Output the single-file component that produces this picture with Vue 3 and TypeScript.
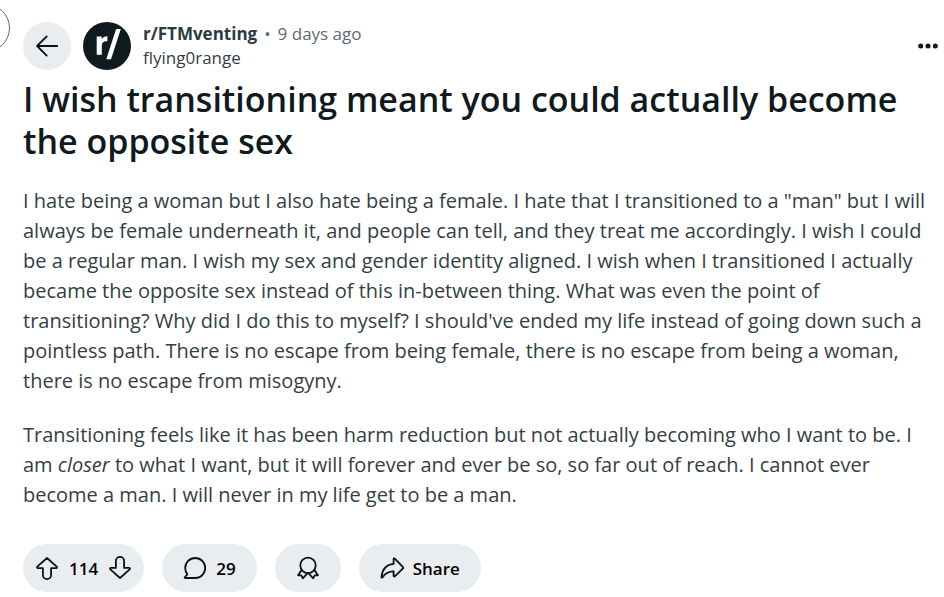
<script setup lang="ts">
interface Post {
  community: string
  age: string
  author: string
  title: string
  votes: number
  comments: number
}

const post: Post = {
  community: 'r/FTMventing',
  age: '9 days ago',
  author: 'flying0range',
  title: 'I wish transitioning meant you could actually become the opposite sex',
  votes: 114,
  comments: 29,
}
</script>

<template>
  <div class="page">
    <button class="nav-toggle" type="button" aria-label="Toggle navigation"></button>
    <article class="post">
      <header class="head">
        <button class="round back" type="button" aria-label="Back">
          <svg width="24" height="24" viewBox="0 0 24 24" class="line">
            <path d="M22.3 12H2.5M11.7 2.4L2.1 12l9.6 9.6" />
          </svg>
        </button>
        <a class="avatar" href="#" aria-label="Community">
          <svg width="48" height="48" viewBox="0 0 48 48">
            <circle cx="24" cy="24" r="24" fill="#0e1a1d" />
            <path fill="#fff" d="M13.7 14.6h5v2.7c1-2 2.9-3 5.7-3v4.9c-3.9-.4-5.6 1.2-5.6 4.5v9h-5.1zM33.1 7h4.7L28 37.3h-4.7z" />
          </svg>
        </a>
        <div class="meta">
          <div class="meta-row">
            <a class="community" href="#">{{ post.community }}</a>
            <span class="dot">•</span>
            <span class="age">{{ post.age }}</span>
          </div>
          <a class="author" href="#">{{ post.author }}</a>
        </div>
        <button class="more" type="button" aria-label="More options">
          <svg width="24" height="24" viewBox="0 0 24 24" fill="#0e1a1d">
            <circle cx="4.7" cy="12" r="2.5" /><circle cx="12" cy="12" r="2.5" /><circle cx="19.3" cy="12" r="2.5" />
          </svg>
        </button>
      </header>

      <h1>{{ post.title }}</h1>

      <div class="body">
        <p>
          I hate being a woman but I also hate being a female. I hate that I transitioned to a "man" but I will<br />
          always be female underneath it, and people can tell, and they treat me accordingly. I wish I could<br />
          be a regular man. I wish my sex and gender identity aligned. I wish when I transitioned I actually<br />
          became the opposite sex instead of this in-between thing. What was even the point of<br />
          transitioning? Why did I do this to myself? I should've ended my life instead of going down such a<br />
          pointless path. There is no escape from being female, there is no escape from being a woman,<br />
          there is no escape from misogyny.
        </p>
        <p>
          Transitioning feels like it has been harm reduction but not actually becoming who I want to be. I<br />
          am <em>closer</em> to what I want, but it will forever and ever be so, so far out of reach. I cannot ever<br />
          become a man. I will never in my life get to be a man.
        </p>
      </div>

      <footer class="actions">
        <div class="pill votes">
          <button type="button" aria-label="Upvote">
            <svg width="24" height="24" viewBox="0 0 24 24" class="line">
              <path d="M12 2L2.3 10.6c-.6.6-.3 1.5.6 1.5h5v6.9a4.1 4.1 0 0 0 8.2 0v-6.9h5c.9 0 1.2-.9.6-1.5z" />
            </svg>
          </button>
          <span class="count">{{ post.votes }}</span>
          <button type="button" aria-label="Downvote">
            <svg width="24" height="24" viewBox="0 0 24 24" class="line">
              <path d="M12 22L2.3 13.4c-.6-.6-.3-1.5.6-1.5h5V5a4.1 4.1 0 0 1 8.2 0v6.9h5c.9 0 1.2.9.6 1.5z" />
            </svg>
          </button>
        </div>
        <button class="pill" type="button" aria-label="Comments">
          <svg width="24" height="24" viewBox="0 0 24 24" class="line">
            <path d="M12.2 22A10 10 0 1 0 2.2 12c0 2.5.8 4.7 2.2 6.4L1.9 21c-.5.5-.3 1 .4 1z" />
          </svg>
          <span>{{ post.comments }}</span>
        </button>
        <button class="pill" type="button" aria-label="Give award">
          <svg width="24" height="24" viewBox="0 0 24 24" class="line">
            <circle cx="12" cy="9.4" r="7.7" />
            <path d="M5.6 14L2.1 19.3l3.2.1 1.5 2.9 4.6-5M18.4 14l3.5 5.3-3.2.1-1.5 2.9-4.6-5" />
          </svg>
        </button>
        <button class="pill" type="button">
          <svg width="24" height="24" viewBox="0 0 24 24" class="line">
            <path d="M13.6 3.2c0-.8.7-1 1.2-.5l8.2 8.5c.3.4.3.8 0 1.2l-8.2 7.9c-.5.5-1.2.2-1.2-.5v-4.4C8.2 15.2 5.2 17.5 2.6 21.3c-.5.7-1.2.5-1.1-.4C2.3 13.2 6.4 8.5 13.6 7.9z" />
          </svg>
          <span>Share</span>
        </button>
      </footer>
    </article>
  </div>
</template>

<style>
body {
  margin: 0;
  background: #fff;
}
</style>

<style scoped>
.page {
  position: relative;
  overflow: hidden;
  font-family: "Open Sans", "Noto Sans", sans-serif;
  color: #0e1a1d;
}
button {
  font: inherit;
  color: inherit;
  border: 0;
  padding: 0;
  background: none;
  cursor: pointer;
}
a {
  color: inherit;
  text-decoration: none;
}
svg {
  display: block;
}
.line {
  fill: none;
  stroke: #0a1214;
  stroke-width: 1.8;
  stroke-linecap: round;
  stroke-linejoin: round;
}
.nav-toggle {
  position: absolute;
  left: -38px;
  top: 4px;
  box-sizing: border-box;
  width: 48px;
  height: 48px;
  border: 1px solid #666b6d;
  border-radius: 50%;
  background: #fff;
}
.post {
  padding: 22px 4px 5px 23px;
}
.head {
  display: flex;
  align-items: center;
  gap: 12px;
}
.round {
  display: grid;
  place-items: center;
  width: 48px;
  height: 48px;
  border-radius: 50%;
  background: #e9edf0;
}
.meta {
  flex: 1;
  font-size: 17px;
  line-height: 24px;
}
.meta-row {
  display: flex;
  gap: 7px;
}
.community {
  font-weight: 700;
  color: #2a3c42;
}
.dot,
.age {
  color: #5c6c74;
}
.author {
  display: block;
  color: #333f44;
}
h1 {
  margin: 8px 0 0;
  font-size: 34px;
  line-height: 42px;
  font-weight: 600;
}
.body {
  margin-top: 24px;
  font-size: 20px;
  line-height: 30px;
  color: #333f44;
}
.body p {
  margin: 0 0 24px;
}
.actions {
  display: flex;
  flex-wrap: wrap;
  gap: 18px;
  margin-top: 34px;
  font-size: 17px;
  font-weight: 600;
  color: #000;
}
.pill {
  display: flex;
  align-items: center;
  gap: 9px;
  height: 48px;
  padding: 0 21px;
  border-radius: 24px;
  background: #e9edf0;
}
.votes {
  gap: 10px;
  padding: 0 12px;
}
</style>
